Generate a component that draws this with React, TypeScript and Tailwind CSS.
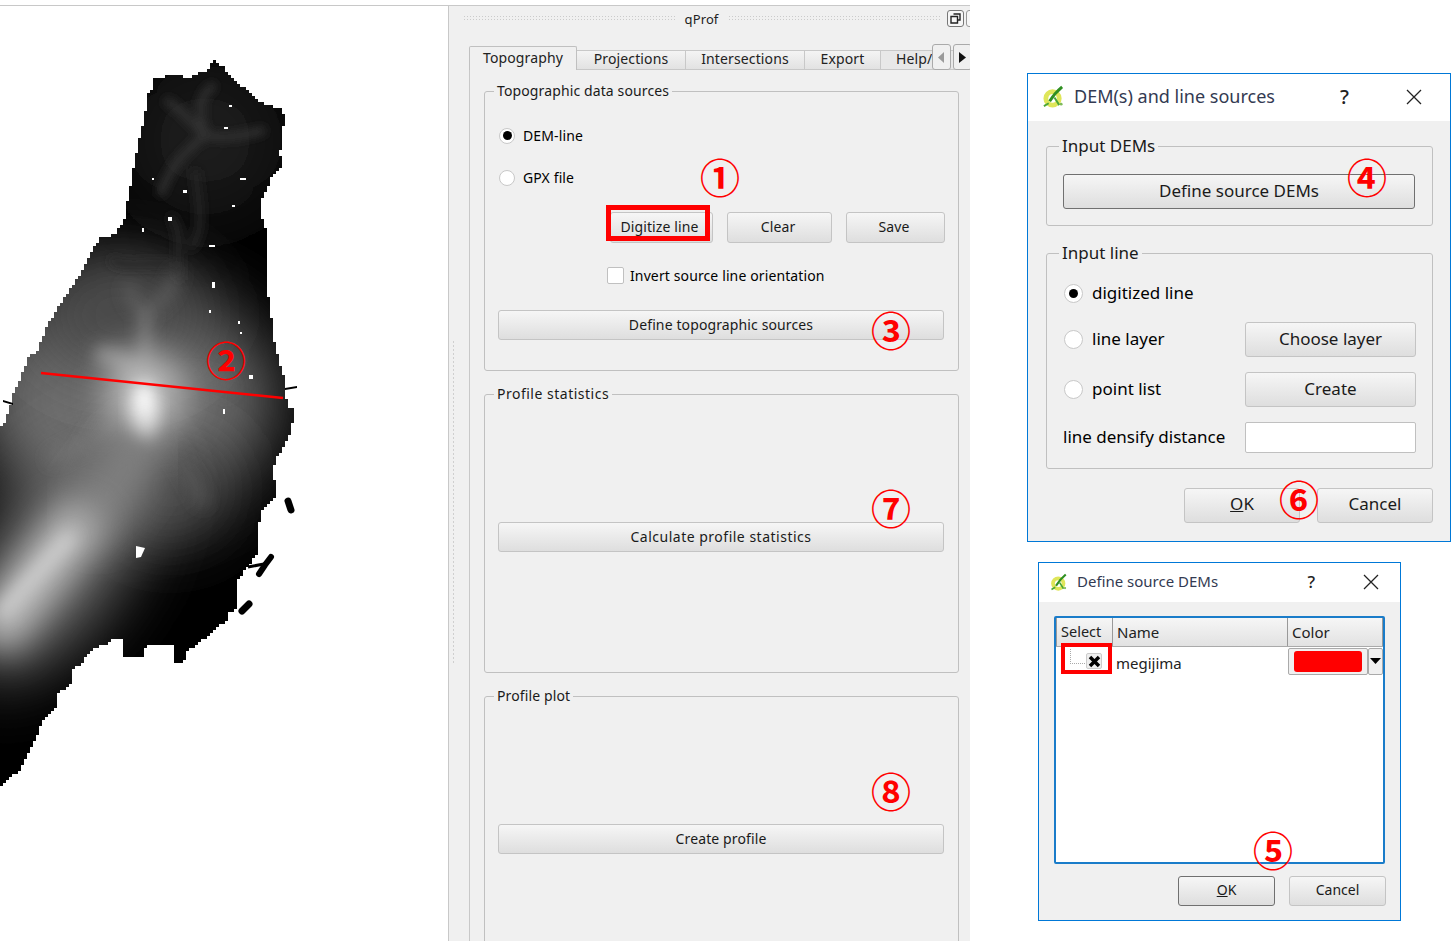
import type { ReactNode } from "react";

const uiFont = { fontFamily: '"Noto Sans", "Liberation Sans", sans-serif' };

const coast: [number, number][] = [
  [148, 92], [153, 89], [154, 78], [175, 75], [188, 78], [197, 72], [208, 70], [212, 60], [222, 67], [233, 82],
  [245, 90], [257, 102], [280, 108], [285, 117], [282, 137], [280, 157], [283, 168], [270, 178], [268, 192],
  [260, 202], [262, 220], [268, 237], [266, 260], [267, 287], [272, 323], [275, 347], [285, 380], [287, 407],
  [295, 408], [293, 423], [288, 442], [275, 463], [273, 477], [276, 490], [274, 500], [263, 510], [257, 530],
  [258, 555], [248, 567], [238, 583], [237, 610], [227, 613], [228, 620], [207, 638], [187, 653], [182, 664],
  [174, 664], [174, 645], [153, 645], [143, 648], [143, 657], [124, 657], [123, 639], [113, 639], [112, 643],
  [95, 648], [83, 663], [73, 673], [70, 687], [58, 695], [55, 710], [43, 723], [35, 742], [28, 757], [20, 770],
  [0, 788], [0, 430], [7, 413], [12, 403], [13, 393], [20, 377], [28, 357], [38, 348], [47, 323], [60, 303],
  [68, 290], [82, 270], [90, 253], [100, 237], [115, 235], [125, 217], [132, 173], [138, 143], [147, 103],
];

// walks the coast on a 3px grid so the edge looks like raster cells
function stepped(points: [number, number][]) {
  let d = "";
  points.forEach(([x, y], i) => {
    const [nx, ny] = points[(i + 1) % points.length];
    const n = Math.max(1, Math.round(Math.max(Math.abs(nx - x), Math.abs(ny - y)) / 3));
    for (let k = 0; k < n; k++) {
      const px = Math.round((x + ((nx - x) * k) / n) / 3) * 3;
      const py = Math.round((y + ((ny - y) * k) / n) / 3) * 3;
      d += d ? `H${px}V${py}` : `M${px} ${py}`;
    }
  });
  return d + "Z";
}

const specks = [
  [229, 105, 3, 2], [224, 127, 4, 2], [152, 178, 2, 2], [240, 178, 6, 2], [183, 190, 4, 3], [232, 205, 3, 2],
  [168, 217, 4, 4], [142, 228, 2, 4], [209, 245, 6, 2], [212, 282, 3, 6], [209, 310, 2, 3], [238, 321, 2, 3],
  [240, 332, 2, 2], [249, 375, 4, 4], [223, 409, 2, 5],
];

function IslandMap() {
  const outline = stepped(coast);
  return (
    <svg width="448" height="935" viewBox="0 6 448 935" className="block">
      <defs>
        <clipPath id="island"><path d={outline} /></clipPath>
        <filter id="b5" x="-50%" y="-50%" width="200%" height="200%"><feGaussianBlur stdDeviation="5" /></filter>
        <filter id="b8" x="-50%" y="-50%" width="200%" height="200%"><feGaussianBlur stdDeviation="8" /></filter>
        <filter id="b18" x="-50%" y="-50%" width="200%" height="200%"><feGaussianBlur stdDeviation="18" /></filter>
        <filter id="b34" x="-80%" y="-80%" width="260%" height="260%"><feGaussianBlur stdDeviation="34" /></filter>
      </defs>
      <path d={outline} fill="#000" shapeRendering="crispEdges" />
      <g clipPath="url(#island)">
        <ellipse cx="125" cy="400" rx="150" ry="115" fill="#6e6e6e" filter="url(#b34)" />
        <ellipse cx="170" cy="490" rx="60" ry="50" fill="#444" filter="url(#b34)" />
        <ellipse cx="55" cy="560" rx="65" ry="135" transform="rotate(35 55 560)" fill="#707070" filter="url(#b34)" />
        <ellipse cx="120" cy="315" rx="85" ry="60" fill="#484848" filter="url(#b34)" />
        <ellipse cx="205" cy="140" rx="80" ry="80" fill="#1c1c1c" filter="url(#b34)" />
        <g fill="none" stroke="#343434" strokeWidth="7" filter="url(#b5)">
          <path d="M205 135C190 150 175 155 160 195M205 135C185 115 175 105 165 100M205 135C225 140 245 135 265 130M205 135C195 100 205 90 215 85" />
          <path d="M195 170C200 210 205 230 190 250M170 215C185 235 175 260 180 280" stroke="#282828" />
          <path d="M110 260C130 270 150 260 175 265" stroke="#2c2c2c" />
        </g>
        <g fill="none" stroke="#646464" strokeWidth="8" filter="url(#b8)">
          <path d="M178 270C170 290 168 300 145 312C130 305 130 290 128 285" />
          <path d="M145 312C145 340 145 360 145 385" stroke="#8a8a8a" />
          <path d="M95 355C120 355 125 365 140 380" stroke="#8a8a8a" strokeWidth="18" />
          <path d="M145 385C190 370 210 380 230 390" stroke="#666" />
          <path d="M145 385C120 430 90 440 50 460" stroke="#777" />
          <path d="M150 430C180 450 190 480 205 505" stroke="#5c5c5c" />
        </g>
        <ellipse cx="145" cy="395" rx="42" ry="46" fill="#b8b8b8" filter="url(#b18)" />
        <ellipse cx="144" cy="412" rx="13" ry="30" fill="#fff" filter="url(#b8)" />
        <path d="M145 430C125 480 100 500 80 530" fill="none" stroke="#808080" strokeWidth="50" filter="url(#b18)" />
        <path d="M85 515C60 550 30 585 -10 640" fill="none" stroke="#c4c4c4" strokeWidth="46" filter="url(#b18)" />
        <path d="M72 535C50 558 25 585 0 615" fill="none" stroke="#d4d4d4" strokeWidth="10" filter="url(#b8)" />
      </g>
      {specks.map(([x, y, w, h]) => (
        <rect key={`${x}-${y}`} x={x} y={y} width={w} height={h} fill="#fff" shapeRendering="crispEdges" />
      ))}
      <path d="M136 546l9 2-4 9-5 1z" fill="#fff" />
      <path d="M288 501l3 9" fill="none" stroke="#000" strokeWidth="7" strokeLinecap="round" />
      <path d="M259 574l6-9 6-8" fill="none" stroke="#000" strokeWidth="6" strokeLinecap="round" />
      <path d="M248 567l16-3" fill="none" stroke="#000" strokeWidth="3" />
      <path d="M242 611l7-7" fill="none" stroke="#000" strokeWidth="7" strokeLinecap="round" />
      <path d="M285 388l12-2v2l-12 2zM3 400l10 3v2l-10-3z" />
      <line x1="41" y1="373" x2="283" y2="398" stroke="#f00" strokeWidth="2.5" />
    </svg>
  );
}

function Circled({ n, x, y }: { n: string; x: number; y: number }) {
  return (
    <span
      className="absolute flex h-[40px] w-[40px] -translate-x-1/2 -translate-y-1/2 items-center justify-center text-[40px] font-bold leading-none text-[#f00]"
      style={{ left: x, top: y, fontFamily: '"Noto Sans CJK JP", "DejaVu Sans", sans-serif' }}
    >
      {n}
    </span>
  );
}

function Btn({ children, className = "", dark = false }: { children: ReactNode; className?: string; dark?: boolean }) {
  return (
    <div
      className={`flex items-center justify-center rounded-[3px] border bg-gradient-to-b from-[#f6f6f6] to-[#dedede] pb-[2px] text-[#1a1a1a] ${
        dark ? "border-[#707070]" : "border-[#c4c4c4]"
      } ${className}`}
    >
      {children}
    </div>
  );
}

function Radio({ on = false, size = 16 }: { on?: boolean; size?: number }) {
  return (
    <span
      className="flex shrink-0 items-center justify-center rounded-full border border-[#c8c8c8] bg-white"
      style={{ width: size, height: size }}
    >
      {on && <span className="h-[9px] w-[9px] rounded-full bg-black" />}
    </span>
  );
}

function Group({ title, className = "", children }: { title: string; className?: string; children?: ReactNode }) {
  return (
    <fieldset className={`rounded-[3px] border border-[#c0c0c0] ${className}`}>
      <legend className="ml-[-4px] px-[3px] leading-[18px] text-[#1a1a1a]">{title}</legend>
      {children}
    </fieldset>
  );
}

function Tab({ label, w }: { label: string; w: string }) {
  return (
    <div className={`flex h-[20px] items-center justify-center border-b border-r border-t border-[#c8c8c8] bg-gradient-to-b from-[#f4f4f4] to-[#e2e2e2] pb-[3px] ${w}`}>
      {label}
    </div>
  );
}

function QgisLogo({ size }: { size: number }) {
  return (
    <svg width={size} height={size} viewBox="0 0 24 24" className="shrink-0">
      <circle cx="11" cy="14" r="7" fill="#fff" stroke="#dfe65a" strokeWidth="5" />
      <path d="M8 17C11 12 15 7 21 2" fill="none" stroke="#2f8f22" strokeWidth="3" />
      <path d="M13 13l5 8M2 22l5-3" fill="none" stroke="#4aa637" strokeWidth="2" />
      <circle cx="20" cy="20" r="1.500" fill="#7fbb5a" />
    </svg>
  );
}

function TitleBar({ title, className, help, close, size }: { title: string; className: string; help: string; close: string; size: number }) {
  return (
    <div className={`flex items-center bg-white pb-[2px] ${className}`}>
      <QgisLogo size={size} />
      <span className="text-[#333a52]">{title}</span>
      <span className={`ml-auto ${help} font-medium text-[#222]`}>?</span>
      <svg width="16" height="16" viewBox="0 0 16 16" className={close}>
        <path d="M1 1l14 14M15 1L1 15" stroke="#222" strokeWidth="1.3" />
      </svg>
    </div>
  );
}

function DockPanel() {
  return (
    <div className="relative h-[935px] w-[522px] shrink-0 overflow-hidden border-l border-[#c8c8c8] bg-[#f0f0f0] text-[14px] tracking-[0.12px]">
      {/* splitter grip */}
      <div className="absolute left-[3px] top-[334px] h-[325px] w-[3px] bg-[radial-gradient(#cfcfcf_1px,transparent_1px)] bg-[length:3px_4px]" />
      {/* dock title */}
      <div className="flex h-[40px] items-start pl-[14px] pt-[4px] text-[13px]">
        <div className="mt-[5px] h-[6px] w-[212px] shrink-0 bg-[radial-gradient(#cbcbcb_1px,transparent_1px)] bg-[length:3px_3px]" />
        <span className="w-[53px] shrink-0 text-center text-[#222]">qProf</span>
        <div className="mt-[5px] h-[6px] w-[212px] shrink-0 bg-[radial-gradient(#cbcbcb_1px,transparent_1px)] bg-[length:3px_3px]" />
        <div className="ml-[7px] flex h-[17px] w-[17px] shrink-0 items-center justify-center rounded-[3px] border border-[#777] bg-[#f6f6f6]">
          <svg width="11" height="11" viewBox="0 0 11 11">
            <path d="M3.500 1h6.500v6h-2M1 3.500h6.500v6.500h-6.500z" fill="none" stroke="#222" strokeWidth="1.400" />
          </svg>
        </div>
        <div className="ml-[2px] h-[17px] w-[10px] shrink-0 rounded-[3px] border border-[#999] bg-[#f6f6f6]" />
      </div>
      {/* tabs */}
      <div className="flex h-[24px] items-end pl-[20px] text-[#222]">
        <div className="flex h-[24px] w-[108px] shrink-0 items-start justify-center rounded-t-[2px] border-x border-t border-[#c0c0c0]">Topography</div>
        <Tab label="Projections" w="w-[109px] shrink-0" />
        <Tab label="Intersections" w="w-[119px] shrink-0" />
        <Tab label="Export" w="w-[76px] shrink-0" />
        <div className="relative flex h-[20px] flex-1 items-center border-y border-[#c8c8c8] bg-[#e8e8e8] pb-[3px] pl-[15px]">
          Help/
          <div className="absolute left-[51px] top-[-7px] flex h-[26px] w-[19px] items-center justify-center rounded-[3px] border border-[#aaa] bg-[#f0f0f0]">
            <svg width="7" height="11" viewBox="0 0 7 11"><path d="M6 0v11L0 5.500z" fill="#9a9a9a" /></svg>
          </div>
          <div className="absolute left-[72px] top-[-7px] flex h-[26px] w-[19px] items-center justify-center rounded-[3px] border border-[#aaa] bg-[#f0f0f0]">
            <svg width="7" height="11" viewBox="0 0 7 11"><path d="M0 0v11l7-5.500z" fill="#111" /></svg>
          </div>
        </div>
      </div>
      {/* tab page */}
      <div className="ml-[20px] flex flex-col gap-[14px] border-l border-[#c8c8c8] pl-[14px] pt-[12px]">
        <Group title="Topographic data sources" className="h-[289px] w-[475px] px-[13px]">
          <div className="flex items-center gap-[8px] pl-px pt-[25px]">
            <Radio on />
            <span>DEM-line</span>
          </div>
          <div className="flex items-center gap-[8px] pl-px pt-[21px]">
            <Radio />
            <span>GPX file</span>
          </div>
          <div className="flex gap-[14px] pl-[112px] pt-[24px]">
            <div className="relative">
              <Btn className="h-[31px] w-[103px] pr-[4px]">Digitize line</Btn>
              <div className="absolute left-[-4px] top-[-7px] h-[36px] w-[104px] border-[5px] border-[#f00]" />
            </div>
            <Btn className="h-[31px] w-[105px] pr-[3px]">Clear</Btn>
            <Btn className="h-[31px] w-[99px] pr-[3px]">Save</Btn>
          </div>
          <div className="flex items-center gap-[6px] pl-[109px] pt-[22px]">
            <span className="h-[17px] w-[17px] rounded-[2px] border border-[#c0c0c0] bg-white" />
            <span>Invert source line orientation</span>
          </div>
          <Btn className="mt-[24px] h-[30px] w-[446px]">Define topographic sources</Btn>
        </Group>
        <Group title="Profile statistics" className="h-[288px] w-[475px] px-[13px] tracking-[0.5px]">
          <Btn className="mt-[119px] h-[30px] w-[446px]">Calculate profile statistics</Btn>
        </Group>
        <Group title="Profile plot" className="h-[300px] w-[475px] px-[13px]">
          <Btn className="mt-[119px] h-[30px] w-[446px]">Create profile</Btn>
        </Group>
      </div>
    </div>
  );
}

function SourcesDialog() {
  return (
    <div className="ml-[57px] mt-[73px] h-[469px] w-[424px] border border-[#0078d7] bg-[#f0f0f0] text-[17px]">
      <TitleBar
        title="DEM(s) and line sources"
        className="h-[47px] gap-[9px] pl-[14px] text-[18px]"
        help="mr-[48px] text-[20px]"
        close="mr-[28px]"
        size={23}
      />
      <div className="pl-[18px] pr-[18px]">
        <Group title="Input DEMs" className="mt-[16px] h-[89px] w-[387px] px-[16px]">
          <Btn dark className="mt-[19px] h-[35px] w-[352px]">Define source DEMs</Btn>
        </Group>
        <Group title="Input line" className="mt-[18px] h-[225px] w-[387px] px-[16px]">
          <div className="mt-[14px] flex h-[35px] items-center gap-[9px] pl-px">
            <Radio on size={19} />
            <span className="pb-[2px]">digitized line</span>
          </div>
          <div className="mt-[11px] flex items-center pl-px">
            <Radio size={19} />
            <span className="ml-[9px] pb-[2px]">line layer</span>
            <Btn className="ml-auto h-[35px] w-[171px]">Choose layer</Btn>
          </div>
          <div className="mt-[15px] flex items-center pl-px">
            <Radio size={19} />
            <span className="ml-[9px] pb-[2px]">point list</span>
            <Btn className="ml-auto h-[35px] w-[171px]">Create</Btn>
          </div>
          <div className="mt-[15px] flex items-center">
            <span className="pb-[2px]">line densify distance</span>
            <div className="ml-auto h-[31px] w-[171px] rounded-[2px] border border-[#c0c0c0] bg-white" />
          </div>
        </Group>
        <div className="mt-[19px] flex w-[387px] justify-end gap-[17px]">
          <Btn className="h-[35px] w-[116px] pb-[4px]"><span className="underline">O</span>K</Btn>
          <Btn className="h-[35px] w-[116px] pb-[4px]">Cancel</Btn>
        </div>
      </div>
    </div>
  );
}

function DemsDialog() {
  return (
    <div className="ml-[68px] mt-[20px] h-[359px] w-[363px] border border-[#0078d7] bg-[#f0f0f0] text-[15px]">
      <TitleBar
        title="Define source DEMs"
        className="h-[39px] gap-[9px] pl-[11px] text-[15px]"
        help="mr-[39px] text-[17px]"
        close="mr-[21px]"
        size={18}
      />
      <div className="pl-[15px] pt-[14px]">
        <div className="h-[248px] w-[331px] rounded-[2px] border-2 border-[#1a7cc9] bg-white">
          <div className="flex h-[29px] border-b border-[#aaa] bg-gradient-to-b from-[#f6f6f6] to-[#e2e2e2] text-[#222]">
            <div className="flex w-[57px] items-center border-x border-[#999] pl-[4px] text-[14.500px]">Select</div>
            <div className="flex w-[175px] items-center border-r border-[#999] pl-[4px]">Name</div>
            <div className="flex w-[95px] items-center border-r border-[#999] pl-[4px]">Color</div>
          </div>
          <div className="flex h-[29px] items-center">
            <div className="relative flex h-full w-[58px] shrink-0 items-start pl-[14px] pt-[2px]">
              <div className="h-[15px] w-[15px] border-b border-l border-dotted border-[#aaa]" />
              <div className="ml-[1px] mt-[4px] flex h-[16px] w-[16px] items-center justify-center rounded-[2px] border border-[#ccc] bg-[#eee]">
                <svg width="13" height="13" viewBox="0 0 13 13"><path d="M2 2l9 9M11 2l-9 9" stroke="#000" strokeWidth="3.500" /></svg>
              </div>
              <div className="absolute left-[5px] top-[-4px] h-[31px] w-[51px] border-[4px] border-[#f00]" />
            </div>
            <span className="ml-[2px] pt-[3px] text-[#222]">megijima</span>
            <div className="ml-auto flex h-[27px] items-center">
              <div className="flex h-[27px] w-[80px] items-center justify-center rounded-[2px] border border-[#aaa] bg-[#f0f0f0]">
                <div className="h-[21px] w-[68px] rounded-[3px] bg-[#f00]" />
              </div>
              <div className="flex h-[27px] w-[15px] items-start justify-center rounded-[2px] border border-[#aaa] bg-[#f0f0f0] pt-[9px]">
                <svg width="11" height="6" viewBox="0 0 11 6"><path d="M0 0h11L5.500 6z" fill="#000" /></svg>
              </div>
            </div>
          </div>
        </div>
        <div className="mt-[12px] flex w-[332px] justify-end gap-[14px] text-[14px]">
          <Btn dark className="h-[30px] w-[97px] pb-[4px]"><span className="underline">O</span>K</Btn>
          <Btn className="h-[30px] w-[97px] pb-[4px]">Cancel</Btn>
        </div>
      </div>
    </div>
  );
}

export default function App() {
  return (
    <div className="relative flex h-[941px] w-[1452px] overflow-hidden bg-white" style={uiFont}>
      <div className="flex h-full w-[970px] shrink-0 flex-col">
        <div className="h-[6px] border-b border-[#c8c8c8] bg-white" />
        <div className="flex">
          <div className="h-[935px] w-[448px] shrink-0 bg-white">
            <IslandMap />
          </div>
          <DockPanel />
        </div>
      </div>
      <div className="flex-1">
        <SourcesDialog />
        <DemsDialog />
      </div>
      <Circled n="①" x={720} y={176} />
      <Circled n="②" x={226} y={359} />
      <Circled n="③" x={891} y={329} />
      <Circled n="④" x={1367} y={176} />
      <Circled n="⑤" x={1273} y={849} />
      <Circled n="⑥" x={1299} y={498} />
      <Circled n="⑦" x={891} y={507} />
      <Circled n="⑧" x={891} y={790} />
    </div>
  );
}
